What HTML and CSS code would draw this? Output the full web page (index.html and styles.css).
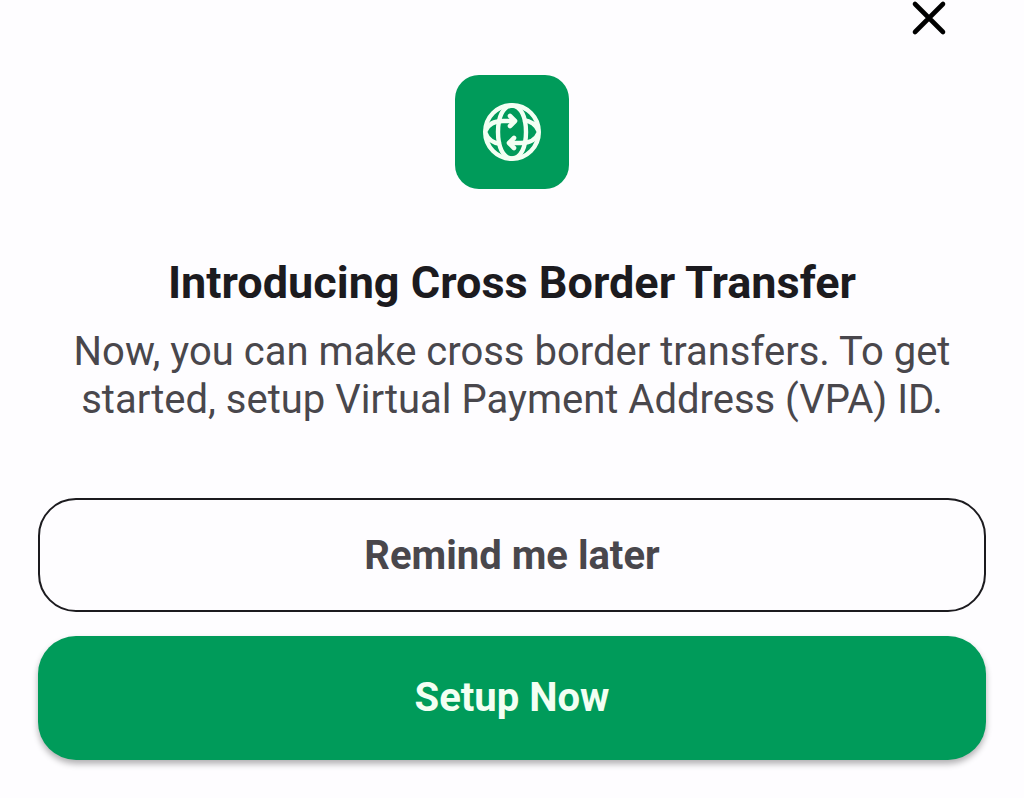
FILE: index.html
```html
<!DOCTYPE html>
<html lang="en">
<head>
  <meta charset="UTF-8">
  <meta name="viewport" content="width=device-width, initial-scale=1.0">
  <title>Introducing Cross Border Transfer</title>
  <link rel="stylesheet" href="styles.css">
</head>
<body>
  <main class="sheet">
    <!-- Close button -->
    <header class="sheet-header">
      <button class="close" type="button" aria-label="Close">
        <svg viewBox="0 0 36 36" width="36" height="36" aria-hidden="true">
          <path d="M4 4L32 32M32 4L4 32"/>
        </svg>
      </button>
    </header>

    <!-- Globe icon -->
    <div class="icon-tile">
      <svg viewBox="0 0 60 60" width="60" height="60" aria-hidden="true">
        <circle cx="30" cy="30" r="26.8"/>
        <path d="M30 3.5C21 4 16 15 16 30S21 56 30 56.500C39 56 44 45 44 30S39 4 30 3.500Z"/>
        <path d="M3.500 29C6 22.500 12 19 21 19H32M41 18C49 19 54.500 23.500 56.500 29"/>
        <path d="M3.500 31C5.500 37 11 41 19 42M28 41H39C48 41 54 37.500 56.500 31"/>
        <path class="arrow" d="M28 14L33 19L28 24M32 36L27 41L32 46"/>
      </svg>
    </div>

    <!-- Message -->
    <h1>Introducing Cross Border Transfer</h1>
    <p>Now, you can make cross border transfers. To get started, setup Virtual Payment Address (VPA) ID.</p>

    <!-- Actions -->
    <div class="actions">
      <button class="btn btn-outline" type="button">Remind me later</button>
      <button class="btn btn-primary" type="button">Setup Now</button>
    </div>
  </main>
</body>
</html>
```
FILE: styles.css
```css
* {
  box-sizing: border-box;
}
body {
  margin: 0;
  font-family: Roboto, sans-serif;
  background-color: #fefdff;
  color: #1c1b1f;
}
.sheet {
  display: flex;
  flex-direction: column;
  align-items: center;
  padding: 0 38px 38px;
  text-align: center;
}
.sheet-header {
  align-self: stretch;
  display: flex;
  justify-content: flex-end;
  padding: 0 39px;
  margin-bottom: 39px;
}
.close {
  width: 36px;
  height: 36px;
  padding: 0;
  border: none;
  background: none;
  cursor: pointer;
}
.close svg {
  display: block;
  fill: none;
  stroke: #000000;
  stroke-width: 4.6;
  stroke-linecap: round;
}
.icon-tile {
  display: flex;
  align-items: center;
  justify-content: center;
  width: 114px;
  height: 114px;
  border-radius: 24px;
  background-color: #009b5a; /* Green */
}
.icon-tile svg {
  fill: none;
  stroke: #f3fff3;
  stroke-width: 4.4;
}
.icon-tile .arrow {
  stroke-width: 4.6;
  stroke-linecap: round;
  stroke-linejoin: round;
}
h1 {
  margin: 66px 0 17px;
  font-size: 45px;
  font-weight: 700;
  line-height: 56px;
}
p {
  max-width: 920px;
  margin: 0 0 74px;
  font-size: 40px;
  line-height: 48px;
  color: #49474c;
}
.actions {
  align-self: stretch;
  display: flex;
  flex-direction: column;
  gap: 24px;
}
.btn {
  width: 100%;
  border-radius: 38px;
  font-family: inherit;
  font-size: 40px;
  font-weight: 700;
  line-height: 48px;
  cursor: pointer;
}
.btn-outline {
  padding: 32px 24px 30px;
  border: 2px solid #1c1b1f;
  background-color: transparent;
  color: #49474c;
}
.btn-primary {
  padding: 38px 24px;
  border: none;
  background-color: #009b5a;
  color: #f3fff3;
  box-shadow: 0 4px 6px rgba(0, 0, 0, 0.3);
}
```
